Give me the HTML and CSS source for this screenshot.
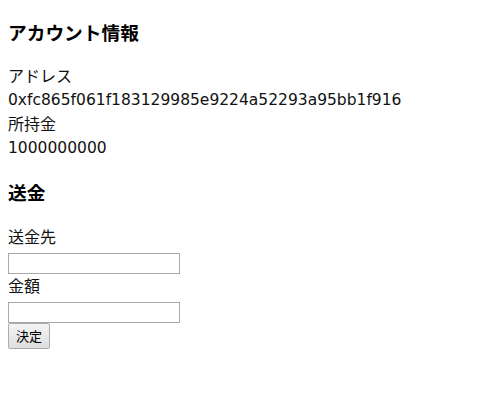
FILE: index.html
```html
<!DOCTYPE html>
<html lang="ja">
<head>
    <meta charset="UTF-8">
    <title>Wallet</title>
    <link rel="stylesheet" href="styles.css">
</head>
<body>
    <h3 class="title">アカウント情報</h3>
    <div class="info">
        <div class="line">アドレス</div>
        <div class="line value">0xfc865f061f183129985e9224a52293a95bb1f916</div>
        <div class="line">所持金</div>
        <div class="line value">1000000000</div>
    </div>

    <h3 class="title">送金</h3>
    <form class="send" onsubmit="return false;">
        <label class="line" for="to">送金先</label>
        <input type="text" id="to" class="field">
        <label class="line" for="amount">金額</label>
        <input type="text" id="amount" class="field">
        <button type="submit" class="submit">決定</button>
    </form>
</body>
</html>
```

FILE: styles.css
```css
body {
    margin: 0 8px 8px;
    font-family: "Noto Sans", "Noto Sans CJK JP", sans-serif;
    font-size: 16px;
    color: #111;
    background: #fff;
}
.title {
    font-size: 18.72px;
    font-weight: bold;
    line-height: 27px;
    margin: 18.72px 0;
    color: #000;
}
.line {
    display: block;
    line-height: 24px;
}
.value {
    font-family: "DejaVu Sans", sans-serif;
    font-size: 15.5px;
}
.send {
    display: flex;
    flex-direction: column;
    align-items: flex-start;
}
.field {
    box-sizing: border-box;
    width: 172px;
    height: 21px;
    margin: 4px 0 0;
    padding: 1px 2px;
    border: 1px solid #a9a9a9;
    font-size: 13px;
}
.submit {
    box-sizing: border-box;
    width: 42px;
    height: 26px;
    margin-top: 0;
    padding: 0;
    font-family: "Noto Sans CJK JP", sans-serif;
    font-size: 13px;
    color: #000;
    background: linear-gradient(#f4f4f4, #dedede);
    border: 1px solid #acacac;
    border-radius: 2px;
}
```
